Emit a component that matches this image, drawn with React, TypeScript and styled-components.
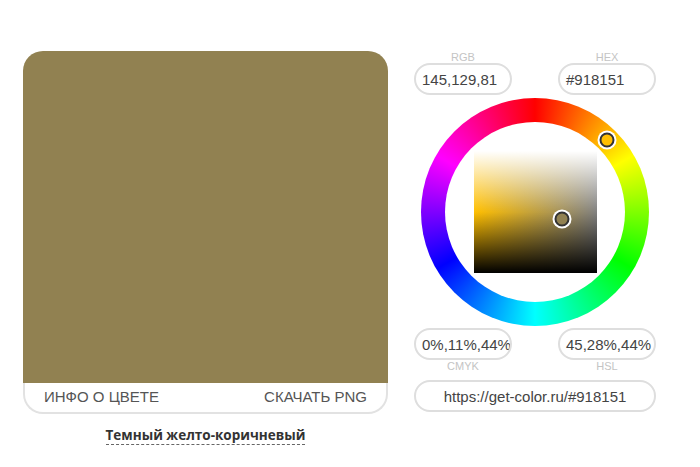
import React from "react";
import styled, { createGlobalStyle } from "styled-components";

const Global = createGlobalStyle`
  html, body { margin: 0; padding: 0; background: #fff; }
  body { font-family: "Liberation Sans", Arial, sans-serif; }
`;

const Page = styled.div`
  display: flex;
  align-items: flex-start;
  gap: 26px;
  padding: 51px 0 0 23px;
  width: 700px;
  height: 467px;
  box-sizing: border-box;
`;

const LeftCol = styled.div`
  width: 365px;
  display: flex;
  flex-direction: column;
  align-items: center;
`;

const Card = styled.div`
  width: 100%;
  display: flex;
  flex-direction: column;
`;

const Swatch = styled.div<{ $color: string }>`
  height: 332px;
  background: ${(p) => p.$color};
  border-radius: 20px 20px 0 0;
`;

const CardFooter = styled.div`
  height: 31px;
  box-sizing: border-box;
  border: 2px solid #e2e2e2;
  border-top: none;
  border-radius: 0 0 20px 20px;
  display: flex;
  align-items: center;
  justify-content: space-between;
  padding: 0 19px 2px 19px;
  font-size: 15px;
  color: #555;
`;

const FooterLink = styled.span`
  cursor: pointer;
`;

const ColorName = styled.span`
  margin-top: 13px;
  font-family: "Open Sans", "Noto Sans", sans-serif;
  font-weight: 700;
  font-size: 13.5px;
  color: #333;
  line-height: 17px;
  border-bottom: 1px dashed #666;
`;

const RightCol = styled.div`
  width: 242px;
  display: flex;
  flex-direction: column;
`;

const FieldRow = styled.div`
  display: flex;
  justify-content: space-between;
`;

const Field = styled.div`
  width: 98px;
  display: flex;
  flex-direction: column;
  align-items: center;
`;

const Label = styled.div`
  font-size: 11px;
  line-height: 12px;
  height: 12px;
  color: #c4c4c4;
`;

const Input = styled.div<{ $wide?: boolean }>`
  width: 100%;
  height: 32px;
  box-sizing: border-box;
  border: 2px solid #dedede;
  border-radius: 16px;
  display: flex;
  align-items: center;
  justify-content: ${(p) => (p.$wide ? "center" : "flex-start")};
  padding: 0 0 0 ${(p) => (p.$wide ? "0" : "6px")};
  font-size: 15px;
  color: #444;
  white-space: nowrap;
  overflow: hidden;
`;

const WheelWrap = styled.div`
  margin: 3px auto 2px;
  width: 228px;
  height: 228px;
  position: relative;
`;

const Wheel = styled.div`
  width: 228px;
  height: 228px;
  border-radius: 50%;
  background: conic-gradient(#ff0000, #ffff00, #00ff00, #00ffff, #0000ff, #ff00ff, #ff0000);
  display: grid;
  place-items: center;
`;

const Inner = styled.div`
  width: 180px;
  height: 180px;
  border-radius: 50%;
  background: #fff;
  display: grid;
  place-items: center;
`;

const Square = styled.div<{ $hue: string }>`
  width: 123px;
  height: 122px;
  position: relative;
  background:
    linear-gradient(to bottom, #fff 0%, rgba(255,255,255,0) 50%, rgba(0,0,0,0) 50%, #000 100%),
    linear-gradient(to right, ${(p) => p.$hue}, #808080);
`;

const Handle = styled.div<{ $fill: string }>`
  position: absolute;
  width: 11px;
  height: 11px;
  border-radius: 50%;
  background: ${(p) => p.$fill};
  border: 2px solid #333;
  box-shadow: 0 0 0 2px #fff;
  transform: translate(-50%, -50%);
`;

const UrlField = styled.div`
  margin-top: 8px;
`;

export default function App() {
  const hue = 45;
  const rad = (hue * Math.PI) / 180;
  const r = 102;
  const hx = 114 + r * Math.sin(rad);
  const hy = 114 - r * Math.cos(rad);
  return (
    <>
      <Global />
      <Page>
        <LeftCol>
          <Card>
            <Swatch $color="#918151" />
            <CardFooter>
              <FooterLink>ИНФО О ЦВЕТЕ</FooterLink>
              <FooterLink>СКАЧАТЬ PNG</FooterLink>
            </CardFooter>
          </Card>
          <ColorName>Темный желто-коричневый</ColorName>
        </LeftCol>
        <RightCol>
          <FieldRow>
            <Field>
              <Label>RGB</Label>
              <Input>145,129,81</Input>
            </Field>
            <Field>
              <Label>HEX</Label>
              <Input>#918151</Input>
            </Field>
          </FieldRow>
          <WheelWrap>
            <Wheel>
              <Inner>
                <Square $hue="#ffbf00">
                  <Handle $fill="#918151" style={{ left: `${(1 - 0.28) * 123}px`, top: `${(1 - 0.44) * 122}px` }} />
                </Square>
              </Inner>
            </Wheel>
            <Handle $fill="#ffbf00" style={{ left: `${hx}px`, top: `${hy}px` }} />
          </WheelWrap>
          <FieldRow>
            <Field>
              <Input>0%,11%,44%</Input>
              <Label>CMYK</Label>
            </Field>
            <Field>
              <Input>45,28%,44%</Input>
              <Label>HSL</Label>
            </Field>
          </FieldRow>
          <UrlField>
            <Input $wide>https://get-color.ru/#918151</Input>
          </UrlField>
        </RightCol>
      </Page>
    </>
  );
}
